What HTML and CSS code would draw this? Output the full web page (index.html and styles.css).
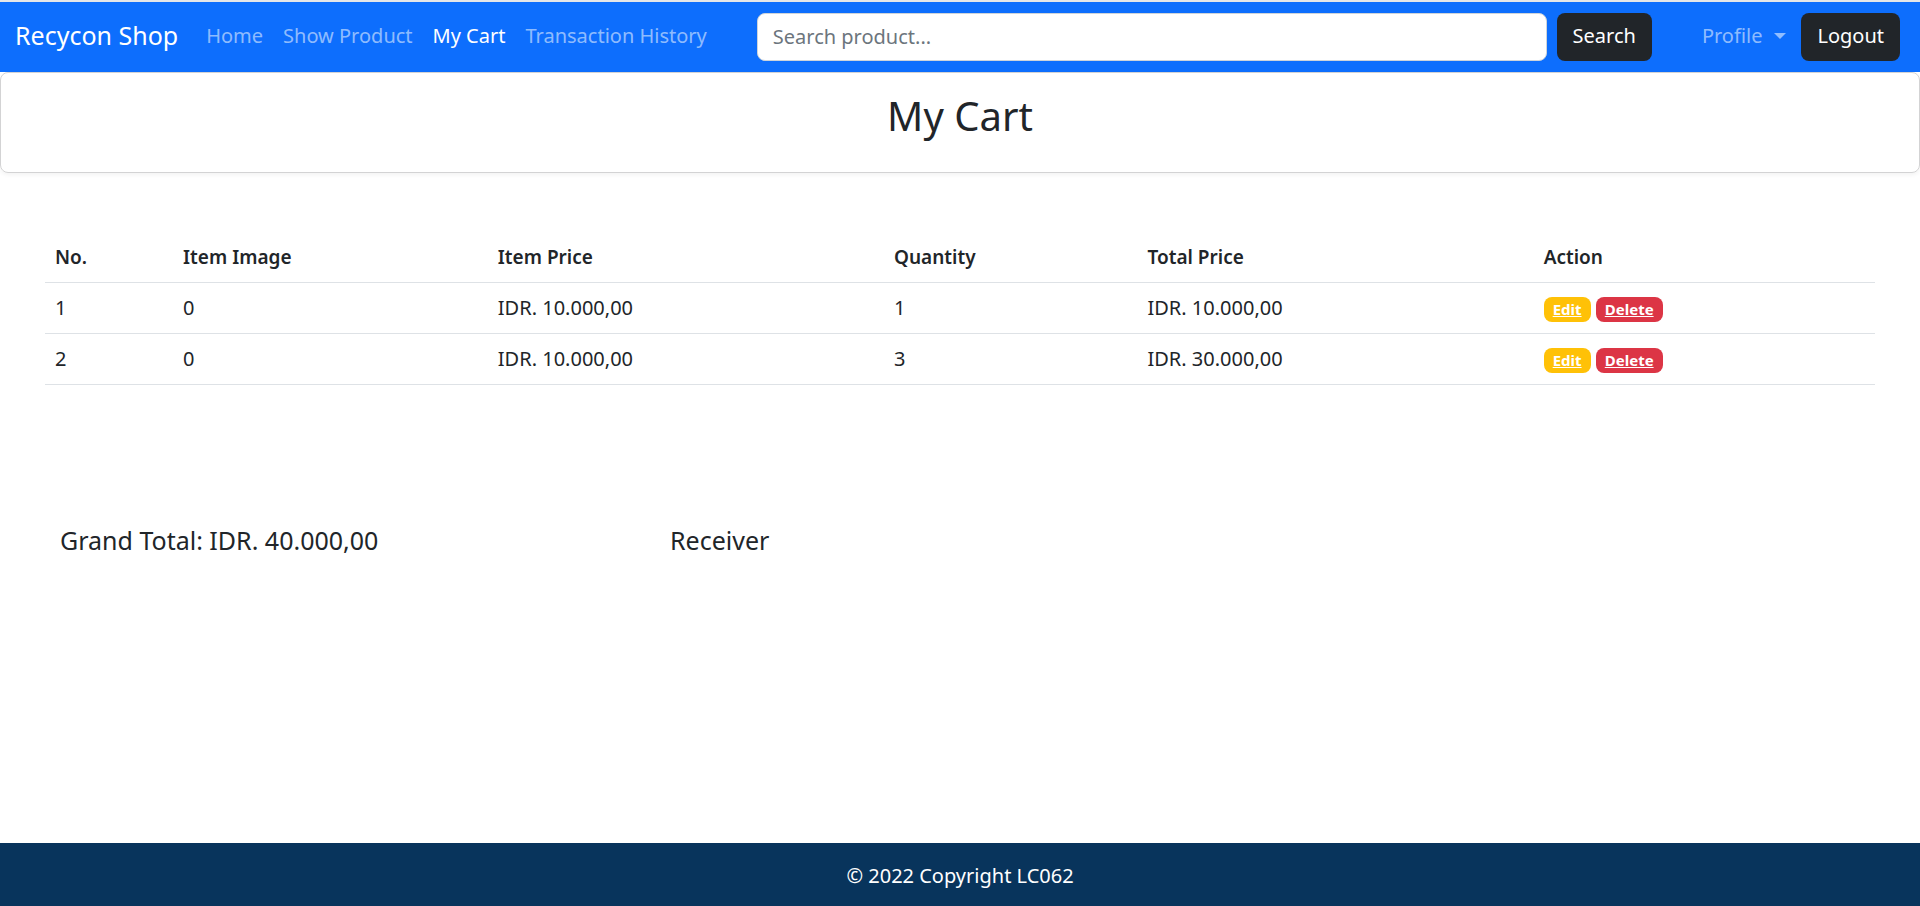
FILE: index.html
```html
<!DOCTYPE html>
<html lang="en">
<head>
<meta charset="utf-8">
<meta name="viewport" content="width=device-width, initial-scale=1">
<title>My Cart - Recycon Shop</title>
<link rel="stylesheet" href="styles.css">
</head>
<body>
<nav class="navbar">
  <a class="brand" href="#">Recycon Shop</a>
  <ul class="nav-list">
    <li><a class="nav-link" href="#">Home</a></li>
    <li><a class="nav-link" href="#">Show Product</a></li>
    <li><a class="nav-link active" href="#" aria-current="page">My Cart</a></li>
    <li><a class="nav-link" href="#">Transaction History</a></li>
  </ul>
  <form class="search">
    <input class="search-input" type="search" placeholder="Search product..." aria-label="Search product">
    <button class="btn" type="submit">Search</button>
  </form>
  <div class="account">
    <button class="profile" type="button" aria-haspopup="true">Profile</button>
    <button class="btn" type="button">Logout</button>
  </div>
</nav>
<header class="card">
  <h1 class="title">My Cart</h1>
</header>
<main class="content">
  <table class="cart">
    <colgroup>
      <col class="col-no"><col class="col-image"><col class="col-price"><col class="col-quantity"><col class="col-price"><col>
    </colgroup>
    <thead>
      <tr>
        <th scope="col">No.</th>
        <th scope="col">Item Image</th>
        <th scope="col">Item Price</th>
        <th scope="col">Quantity</th>
        <th scope="col">Total Price</th>
        <th scope="col">Action</th>
      </tr>
    </thead>
    <tbody>
      <tr>
        <td>1</td>
        <td>0</td>
        <td>IDR. 10.000,00</td>
        <td>1</td>
        <td>IDR. 10.000,00</td>
        <td><a class="badge edit" href="#">Edit</a> <a class="badge delete" href="#">Delete</a></td>
      </tr>
      <tr>
        <td>2</td>
        <td>0</td>
        <td>IDR. 10.000,00</td>
        <td>3</td>
        <td>IDR. 30.000,00</td>
        <td><a class="badge edit" href="#">Edit</a> <a class="badge delete" href="#">Delete</a></td>
      </tr>
    </tbody>
  </table>
  <section class="summary">
    <h2 class="summary-text">Grand Total: IDR. 40.000,00</h2>
    <h2 class="summary-text">Receiver</h2>
  </section>
</main>
<footer class="footer">© 2022 Copyright LC062</footer>
</body>
</html>
```

FILE: styles.css
```css
* {
  box-sizing: border-box;
}

body {
  display: flex;
  flex-direction: column;
  min-height: 100vh;
  margin: 0;
  border-top: 2px solid #e4e6e8;
  background: #fff;
  color: #212529;
  font-family: "Noto Sans", sans-serif;
  font-size: 20px;
  line-height: 30px;
}

button,
input {
  font: inherit;
}

.navbar {
  display: flex;
  align-items: center;
  padding: 11px 20px 11px 15px;
  background: #0d6efd;
}

.brand {
  margin-right: 18px;
  padding-bottom: 4px;
  color: #fff;
  font-size: 25px;
  line-height: 38px;
  text-decoration: none;
  white-space: nowrap;
}

.nav-list {
  display: flex;
  margin: 0;
  padding: 0;
  list-style: none;
}

.nav-link {
  display: block;
  padding: 0 10px 2px;
  color: rgba(255, 255, 255, 0.55);
  text-decoration: none;
  white-space: nowrap;
}

.nav-link.active {
  color: #fff;
}

.search {
  display: flex;
  flex: 1;
  gap: 10px;
  margin: 0 50px 0 40px;
}

.search-input {
  flex: 1;
  min-width: 0;
  height: 48px;
  padding: 0 15px 2px;
  border: 1px solid #ced4da;
  border-radius: 8px;
  background: #fff;
  color: #212529;
  appearance: none;
}

.search-input::placeholder {
  color: #6c757d;
  opacity: 1;
}

.btn {
  height: 48px;
  padding: 0 16px 2px;
  border: 0;
  border-radius: 8px;
  background: #212529;
  color: #fff;
}

.account {
  display: flex;
  align-items: center;
  gap: 15px;
}

.profile {
  display: flex;
  align-items: center;
  gap: 12px;
  padding: 0 0 2px;
  border: 0;
  background: none;
  color: rgba(255, 255, 255, 0.55);
}

.profile::after {
  content: "";
  border-top: 6px solid;
  border-right: 6px solid transparent;
  border-left: 6px solid transparent;
}

.card {
  padding: 18px 20px 31px;
  border: 1px solid #d3d3d4;
  border-radius: 8px;
  box-shadow: 0 2px 4px rgba(0, 0, 0, 0.05);
  text-align: center;
}

.title {
  margin: 0;
  font-size: 40px;
  font-weight: 400;
  line-height: 50px;
}

.content {
  flex: 1;
  padding: 59px 45px 0;
}

.cart {
  width: 100%;
  border-collapse: collapse;
  table-layout: fixed;
}

.col-no {
  width: 7%;
}

.col-image {
  width: 17.2%;
}

.col-price {
  width: 21.65%;
}

.col-quantity {
  width: 13.85%;
}

.cart th,
.cart td {
  padding: 10px;
  border-bottom: 1px solid #dee2e6;
  text-align: left;
}

.cart th {
  font-size: 19px;
  font-weight: 600;
}

.badge {
  display: inline-block;
  padding: 4px 9px;
  border-radius: 8px;
  color: #fff;
  font-size: 15px;
  font-weight: 700;
  line-height: 17px;
}

.edit {
  background: #ffc107;
}

.delete {
  background: #dc3545;
}

.summary {
  display: grid;
  grid-template-columns: 1fr 2fr;
  margin-top: 140px;
}

.summary-text {
  margin: 0;
  padding: 0 15px;
  font-size: 25px;
  font-weight: 400;
}

.footer {
  padding: 18px 20px 15px;
  background: #08345c;
  color: #fff;
  text-align: center;
}
```
